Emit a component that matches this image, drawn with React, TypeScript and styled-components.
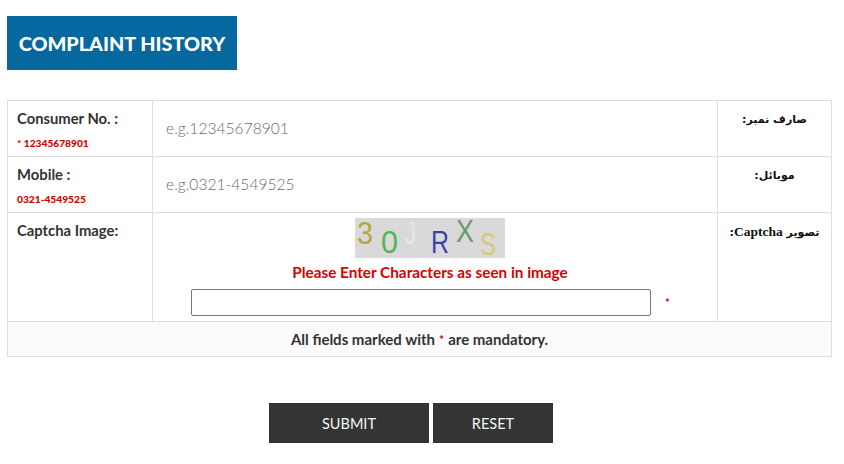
import React from 'react';
import styled, { createGlobalStyle } from 'styled-components';

const GlobalStyle = createGlobalStyle`
  html, body {
    margin: 0;
    padding: 0;
    background: #fff;
  }
  body {
    font-family: Lato, "Open Sans", sans-serif;
    color: #333;
  }
`;

const Page = styled.div`
  width: 844px;
  height: 464px;
  box-sizing: border-box;
  padding: 16px 12px 0 7px;
  overflow: hidden;
`;

const Title = styled.h2`
  display: inline-block;
  margin: 0;
  box-sizing: border-box;
  width: 230px;
  height: 54px;
  line-height: 54px;
  text-align: center;
  font-size: 19.8px;
  font-weight: 900;
  color: #fff;
  background: #07689f;
  white-space: nowrap;
`;

const FormGrid = styled.div`
  margin-top: 30px;
  display: grid;
  grid-template-columns: 145px 565px 114px;
  grid-template-rows: 56px 56px 109px 35px;
  border-top: 1px solid #ddd;
  border-left: 1px solid #ddd;
  width: 825px;
  box-sizing: border-box;
`;

const Cell = styled.div`
  border-right: 1px solid #ddd;
  border-bottom: 1px solid #ddd;
  box-sizing: border-box;
  min-width: 0;
`;

const LabelCell = styled(Cell)`
  padding: 8px 0 0 9px;
`;

const Label = styled.div`
  font-size: 14.8px;
  font-weight: 700;
  line-height: 18px;
  color: #333;
`;

const Hint = styled.div`
  margin-top: 10px;
  font-size: 10.2px;
  font-weight: 900;
  line-height: 13px;
  color: #d40000;
`;

const ValueCell = styled(Cell)`
  display: flex;
  align-items: center;
  padding: 0 0 2px 13px;
`;

const TextInput = styled.input`
  border: 0;
  outline: 0;
  padding: 0;
  width: 100%;
  font-family: inherit;
  font-size: 15.6px;
  font-weight: 300;
  color: #333;
  background: transparent;
  &::placeholder {
    color: #646c74;
    opacity: 1;
  }
`;

const UrduCell = styled(Cell)`
  padding-top: 9px;
  text-align: center;
  direction: rtl;
  font-family: "DejaVu Sans", serif;
  font-size: 11px;
  font-weight: 700;
  line-height: 20px;
  color: #111;
`;

const Latin = styled.span`
  font-family: "Liberation Serif", serif;
  font-size: 13.5px;
`;

const CaptchaCell = styled(Cell)`
  display: flex;
  flex-direction: column;
  align-items: center;
  padding: 5px 10px 0 0;
`;

const CaptchaImage = styled.svg`
  display: block;
  width: 150px;
  height: 40px;
  background: #d9d9d9;
  overflow: visible;
`;

const CaptchaPrompt = styled.div`
  margin-top: 5px;
  font-size: 15.3px;
  font-weight: 700;
  line-height: 18px;
  color: #d80000;
`;

const CaptchaRow = styled.div`
  margin-top: 8px;
  display: flex;
  align-items: center;
  align-self: flex-start;
  padding-left: 38px;
`;

const CaptchaInput = styled.input`
  width: 460px;
  height: 27px;
  box-sizing: border-box;
  padding: 1px 2px;
  border: 1px solid #767676;
  border-radius: 2px;
  outline: 0;
  background: #fff;
`;

const Star = styled.span`
  color: #d40000;
  font-weight: 700;
  font-size: 12px;
`;

const SmallStar = styled.span`
  margin-left: 14px;
  color: #d40000;
  font-size: 11px;
  font-weight: 700;
  line-height: 1;
`;

const NoteCell = styled(Cell)`
  grid-column: 1 / 4;
  display: flex;
  align-items: center;
  justify-content: center;
  gap: 4px;
  background: #fbfbfb;
  font-size: 15px;
  font-weight: 700;
  color: #333;
`;

const Actions = styled.div`
  margin-top: 46px;
  padding-left: 262px;
  display: flex;
  gap: 4px;
`;

const ActionButton = styled.button<{ $width: number }>`
  width: ${props => props.$width}px;
  height: 40px;
  padding: 0;
  border: 0;
  background: #323436;
  color: #f4f4ee;
  font-family: inherit;
  font-size: 14.5px;
  font-weight: 400;
`;

const CaptchaGlyph = styled.text<{ $fill: string }>`
  fill: ${props => props.$fill};
  font-family: "Liberation Sans", sans-serif;
  font-size: 32px;
`;

// letters of the captcha picture: x, baseline, drawn width, colour
const captchaLetters = [
  { ch: '3', x: 2, y: 26, w: 16, fill: '#b5a83a' },
  { ch: '0', x: 26, y: 35, w: 17, fill: '#55b455' },
  { ch: 'J', x: 50, y: 26, w: 11, fill: '#e6e6e6' },
  { ch: 'R', x: 76, y: 35, w: 18, fill: '#3c3fae' },
  { ch: 'X', x: 101, y: 24, w: 18, fill: '#6c9a6c' },
  { ch: 'S', x: 125, y: 37, w: 16, fill: '#d6c878' },
];

export default function App() {
  return (
    <>
      <GlobalStyle />
      <Page>
        <Title>COMPLAINT HISTORY</Title>
        <FormGrid>
          <LabelCell>
            <Label>Consumer No. :</Label>
            <Hint>* 12345678901</Hint>
          </LabelCell>
          <ValueCell>
            <TextInput placeholder="e.g.12345678901" />
          </ValueCell>
          <UrduCell>صارف نمبر:</UrduCell>

          <LabelCell>
            <Label>Mobile :</Label>
            <Hint>0321-4549525</Hint>
          </LabelCell>
          <ValueCell>
            <TextInput placeholder="e.g.0321-4549525" />
          </ValueCell>
          <UrduCell>موبائل:</UrduCell>

          <LabelCell>
            <Label>Captcha Image:</Label>
          </LabelCell>
          <CaptchaCell>
            <CaptchaImage viewBox="0 0 150 40">
              {captchaLetters.map(l => (
                <CaptchaGlyph
                  key={l.ch}
                  x={l.x}
                  y={l.y}
                  $fill={l.fill}
                  textLength={l.w}
                  lengthAdjust="spacingAndGlyphs"
                >
                  {l.ch}
                </CaptchaGlyph>
              ))}
            </CaptchaImage>
            <CaptchaPrompt>Please Enter Characters as seen in image</CaptchaPrompt>
            <CaptchaRow>
              <CaptchaInput />
              <SmallStar>*</SmallStar>
            </CaptchaRow>
          </CaptchaCell>
          <UrduCell>
            تصویر <Latin>Captcha</Latin>:
          </UrduCell>

          <NoteCell>
            <span>All fields marked with</span>
            <Star>*</Star>
            <span>are mandatory.</span>
          </NoteCell>
        </FormGrid>
        <Actions>
          <ActionButton $width={160}>SUBMIT</ActionButton>
          <ActionButton $width={120}>RESET</ActionButton>
        </Actions>
      </Page>
    </>
  );
}
